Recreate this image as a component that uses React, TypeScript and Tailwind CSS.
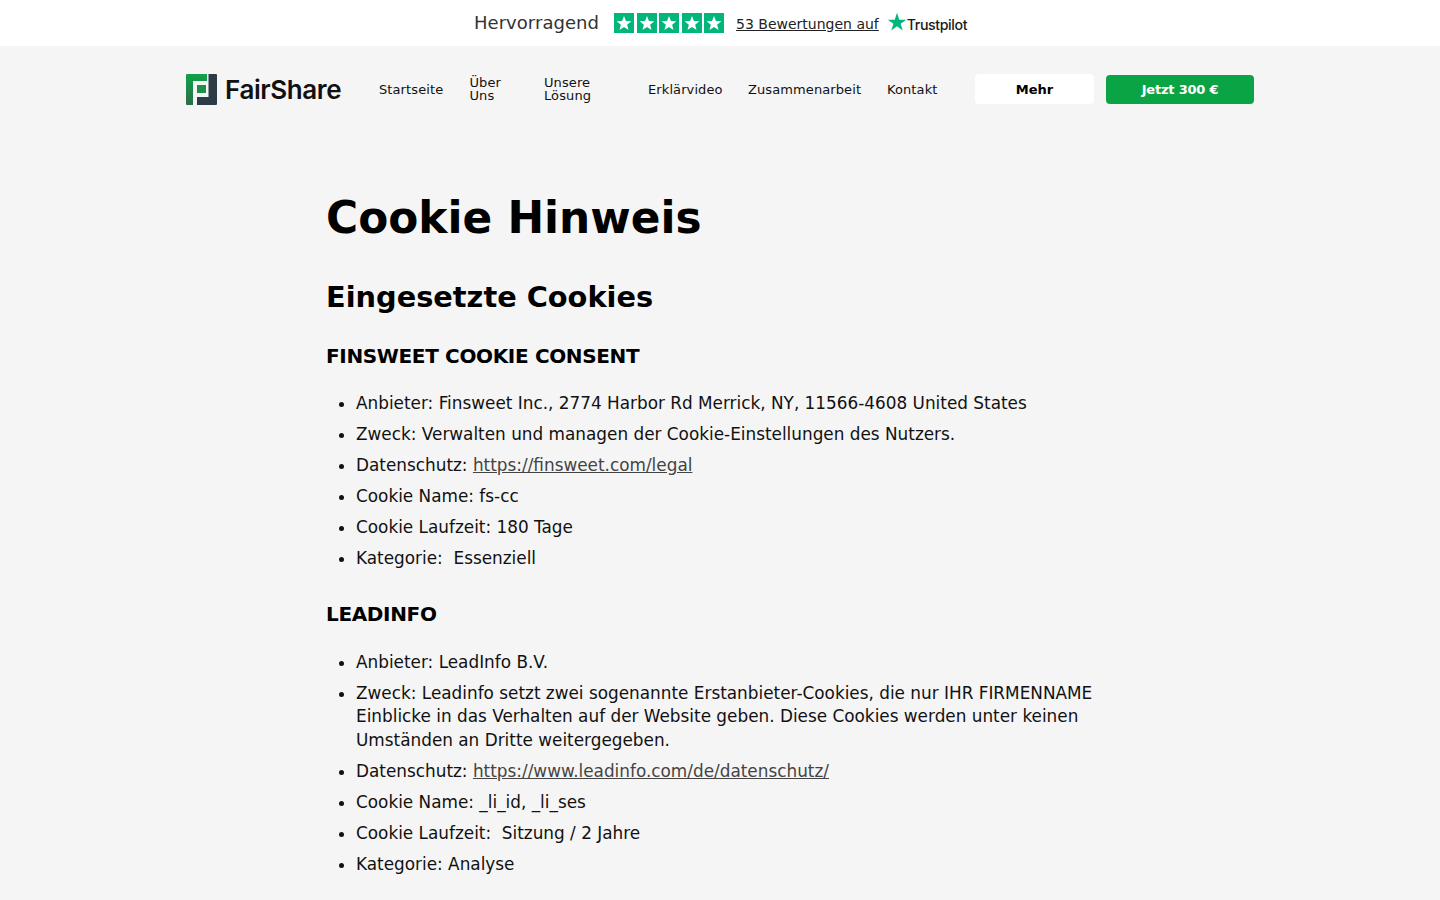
const font = "font-['DejaVu_Sans',sans-serif]";

function Star() {
  return (
    <span className="w-[20px] h-[20px] bg-[#00b67a] flex items-center justify-center">
      <svg viewBox="0 0 24 24" className="w-[16px] h-[16px]" fill="#fff">
        <path d="M12 1.5l2.9 7.6 8.1.4-6.3 5.1 2.1 7.9L12 18.1l-6.8 4.4 2.1-7.9L1 9.5l8.1-.4z" />
      </svg>
    </span>
  );
}

function Logo() {
  return (
    <div className="flex items-center gap-[8px] w-[155px]">
      <svg viewBox="0 0 31 31" className="w-[31px] h-[31px] shrink-0">
        <defs>
          <linearGradient id="g" x1="0" y1="0" x2="0" y2="1">
            <stop offset="0" stopColor="#0fa24a" />
            <stop offset="1" stopColor="#2a6f47" />
          </linearGradient>
        </defs>
        <path d="M1 0h20v7H7v24H1a1 1 0 0 1-1-1V1a1 1 0 0 1 1-1z" fill="url(#g)" />
        <path d="M11 11h9v8h-9z" fill="#1f8f48" />
        <path d="M22.5 0H30a1 1 0 0 1 1 1v29a1 1 0 0 1-1 1H11v-8h11.500z" fill="#2d3b47" />
      </svg>
      <span className="font-['Inter',sans-serif] font-semibold text-[26px] leading-none tracking-[-0.4px] text-[#111]">FairShare</span>
    </div>
  );
}

function Item({ children }: { children: React.ReactNode }) {
  return <li className="mb-[7.5px]">{children}</li>;
}

function Link({ children }: { children: React.ReactNode }) {
  return <a href="#" className="underline text-[#444]">{children}</a>;
}

export default function App() {
  return (
    <div className={`${font} bg-[#f5f5f5] text-black overflow-hidden h-[900px]`}>
      <div className="h-[46px] bg-white flex items-center justify-center">
        <div className="flex items-center ml-[1px]">
          <span className="text-[18px] text-[#333] tracking-[0.05px] -mt-[1px]">Hervorragend</span>
          <span className="flex gap-[2.5px] ml-[15px]">
            <Star /><Star /><Star /><Star /><Star />
          </span>
          <a href="#" className="underline text-[14px] text-[#222] ml-[12px] mt-[2px]">53 Bewertungen auf</a>
          <span className="flex items-center ml-[8px]">
            <svg viewBox="0 0 24 24" className="w-[20px] h-[20px] -mt-[2px]" fill="#00b67a">
              <path d="M12 1l2.7 8.2H23l-6.7 4.9 2.6 8.1L12 17.1l-6.9 5.1 2.6-8.1L1 9.2h8.3z" />
            </svg>
            <span className="font-['Inter',sans-serif] font-medium text-[14.200px] tracking-[-0.4px] text-[#191919] mt-[3px]">Trustpilot</span>
          </span>
        </div>
      </div>

      <header className="w-[1068px] ml-[186px] mt-[28px] h-[31px] flex items-center">
        <Logo />
        <nav className="flex items-center text-[13px] leading-[13px] tracking-[0.1px] ml-[38px] text-[#111]">
          <a className="w-[90.500px]">Startseite</a>
          <a className="w-[74.500px] pr-[30px] -mt-[1px]">Über Uns</a>
          <a className="w-[104px] pr-[30px] -mt-[1px]">Unsere Lösung</a>
          <a className="w-[100px]">Erklärvideo</a>
          <a className="w-[139px]">Zusammenarbeit</a>
          <a className="w-[88px]">Kontakt</a>
        </nav>
        <button className="w-[119px] h-[30px] -mt-[1px] pt-[2px] bg-white rounded-[4px] text-[13px] font-bold text-black">Mehr</button>
        <button className="w-[148px] h-[29px] ml-[12px] bg-[#0aa445] rounded-[4px] text-[13px] font-bold text-white tracking-[-0.2px]">Jetzt 300 €</button>
      </header>

      <main className="w-[787px] ml-[326px] mt-[86px] text-[16.880px] leading-[23.52px] text-[#111]">
        <h1 className="text-[43.800px] leading-[54px] font-bold text-black">Cookie Hinweis</h1>
        <h2 className="text-[28.800px] leading-[36px] font-bold text-black mt-[34px]">Eingesetzte Cookies</h2>
        <h3 className="text-[20px] leading-[26px] tracking-[-0.35px] font-bold text-black mt-[28px]">FINSWEET COOKIE CONSENT</h3>
        <ul className="list-disc pl-[30px] mt-[23px]">
          <Item>Anbieter: Finsweet Inc., 2774 Harbor Rd Merrick, NY, 11566-4608 United States</Item>
          <Item>Zweck: Verwalten und managen der Cookie-Einstellungen des Nutzers.</Item>
          <Item>Datenschutz: <Link>https://finsweet.com/legal</Link></Item>
          <Item>Cookie Name: fs-cc</Item>
          <Item>Cookie Laufzeit: 180 Tage</Item>
          <Item>Kategorie:&nbsp; Essenziell</Item>
        </ul>
        <h3 className="text-[20px] leading-[26px] tracking-[-0.35px] font-bold text-black mt-[30px]">LEADINFO</h3>
        <ul className="list-disc pl-[30px] mt-[24.250px]">
          <Item>Anbieter: LeadInfo B.V.</Item>
          <Item>Zweck: Leadinfo setzt zwei sogenannte Erstanbieter-Cookies, die nur IHR FIRMENNAME Einblicke in das Verhalten auf der Website geben. Diese Cookies werden unter keinen Umständen an Dritte weitergegeben.</Item>
          <Item>Datenschutz: <Link>https://www.leadinfo.com/de/datenschutz/</Link></Item>
          <Item>Cookie Name: _li_id, _li_ses</Item>
          <Item>Cookie Laufzeit:&nbsp; Sitzung / 2 Jahre</Item>
          <Item>Kategorie: Analyse</Item>
        </ul>
      </main>
    </div>
  );
}
